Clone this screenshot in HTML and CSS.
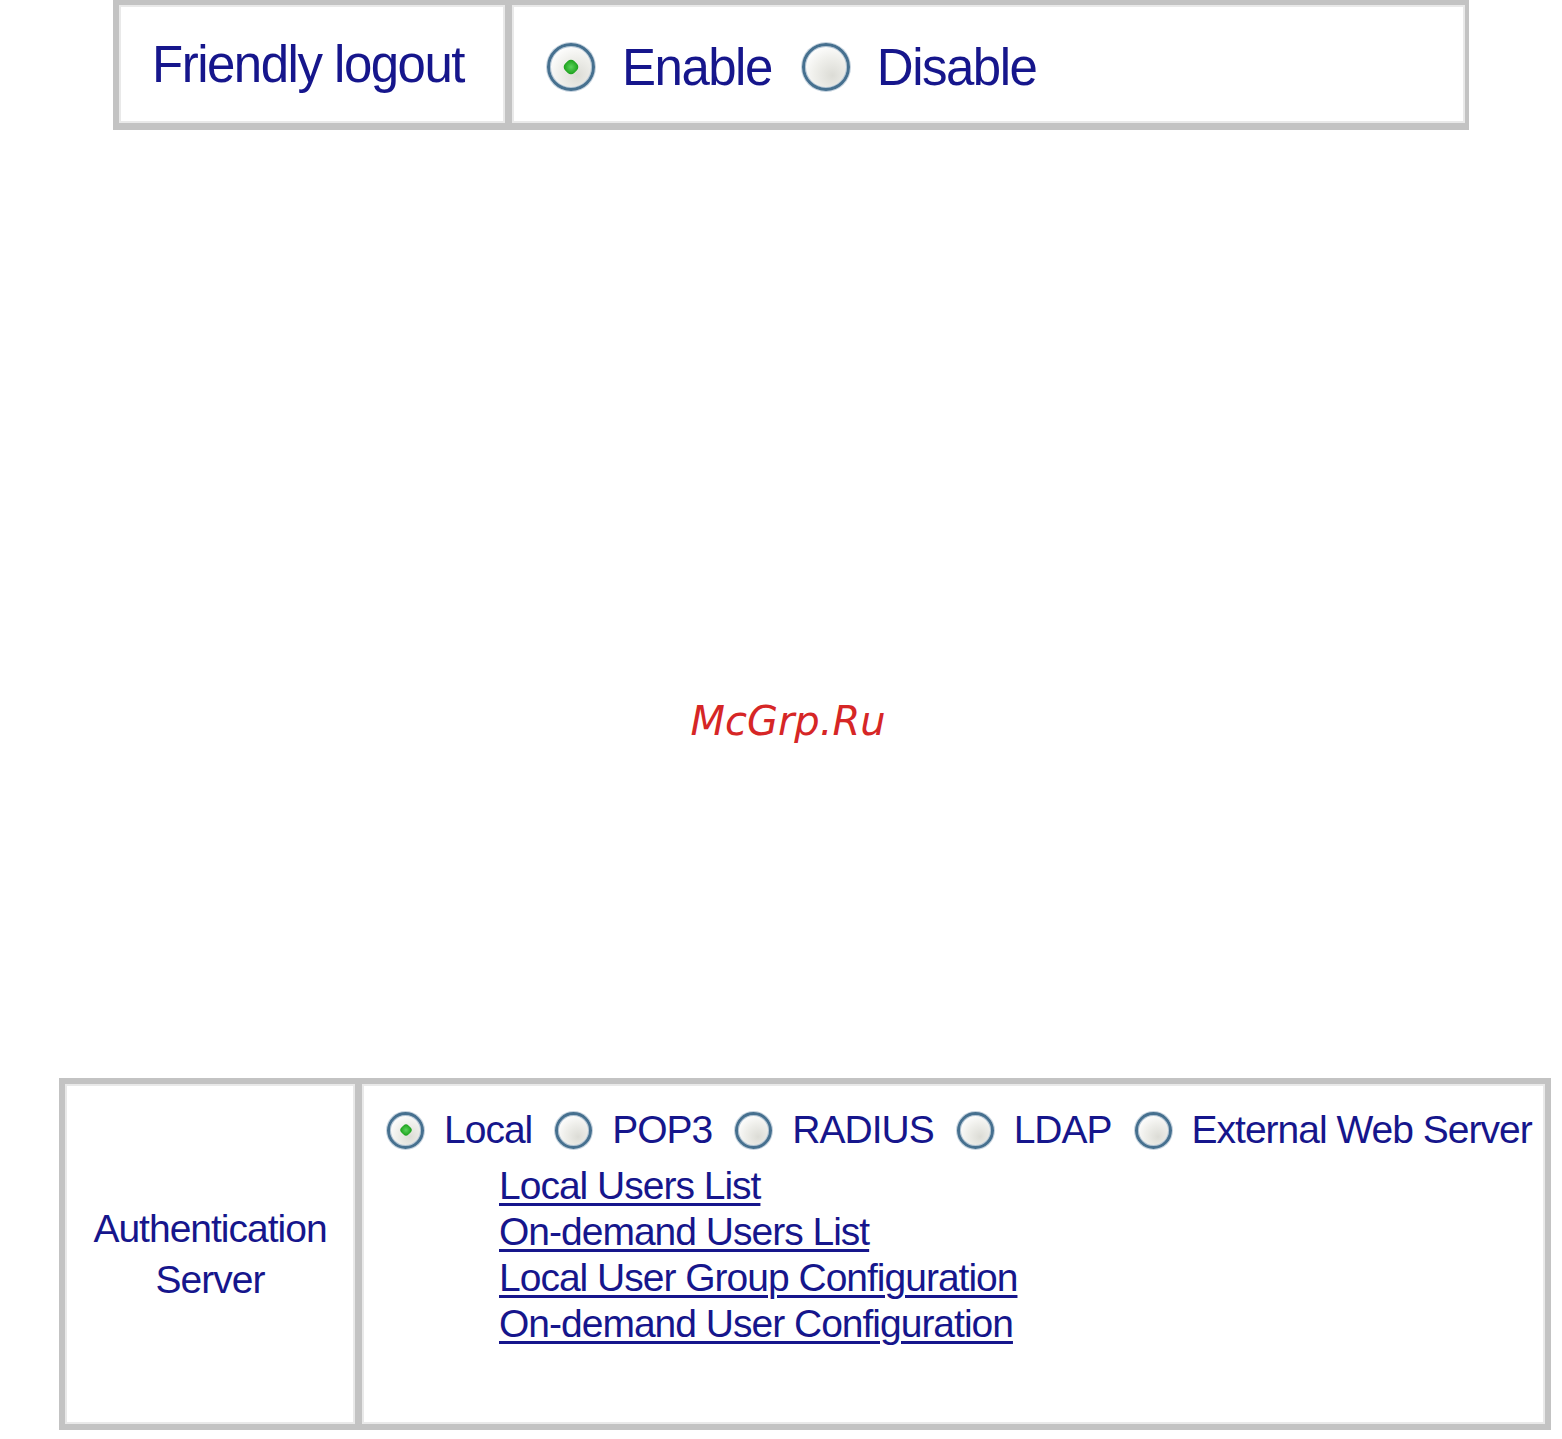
FILE: index.html
```html
<!DOCTYPE html>
<html lang="en">
<head>
<meta charset="utf-8">
<title>Login settings</title>
<link rel="stylesheet" href="styles.css">
</head>
<body>
<div class="page">
  <table class="opt opt-logout">
    <tr>
      <td class="label">Friendly logout</td>
      <td class="value">
        <div class="choices">
          <span class="radio on"></span><span class="choice-text">Enable</span>
          <span class="radio"></span><span class="choice-text">Disable</span>
        </div>
      </td>
    </tr>
  </table>

  <div class="mark">McGrp.Ru</div>

  <table class="opt opt-auth">
    <colgroup>
      <col class="col-label">
      <col>
    </colgroup>
    <tr>
      <td class="label">Authentication<br>Server</td>
      <td class="value">
        <div class="choices">
          <span class="radio on"></span><span class="choice-text">Local</span>
          <span class="radio"></span><span class="choice-text">POP3</span>
          <span class="radio"></span><span class="choice-text">RADIUS</span>
          <span class="radio"></span><span class="choice-text">LDAP</span>
          <span class="radio"></span><span class="choice-text">External Web Server</span>
        </div>
        <ul class="links">
          <li><a href="#">Local Users List</a></li>
          <li><a href="#">On-demand Users List</a></li>
          <li><a href="#">Local User Group Configuration</a></li>
          <li><a href="#">On-demand User Configuration</a></li>
        </ul>
      </td>
    </tr>
  </table>
</div>
</body>
</html>
```

FILE: styles.css
```css
html, body {
  margin: 0;
  padding: 0;
  background: #ffffff;
}

body {
  font-family: "Liberation Sans", Arial, sans-serif;
  color: #16168c;
}

.page {
  width: 1562px;
}

/* settings tables */
.opt {
  border-collapse: separate;
  border-spacing: 0;
  border: 6px solid #c3c3c3;
  background: #ffffff;
}

.opt td {
  padding: 0;
  box-shadow: inset 0 0 0 2px #e9e9e9;
}

.opt .label {
  border-right: 7px solid #c3c3c3;
}

/* friendly logout row */
.opt-logout {
  margin-left: 113px;
  width: 1356px;
  height: 130px;
  border-top-width: 5px;
  border-bottom-width: 7px;
  border-right-width: 4px;
  font-size: 51px;
  letter-spacing: -1.5px;
}

.opt-logout .label {
  width: 353px;
  padding-left: 33px;
  vertical-align: middle;
  white-space: nowrap;
}

.opt-logout .value {
  padding-left: 35px;
  vertical-align: middle;
}

.opt-logout .choices {
  display: flex;
  align-items: center;
  padding-top: 6px;
}

.opt-logout .radio {
  width: 48px;
  height: 48px;
  margin-right: 27px;
}

.opt-logout .radio.on::after {
  width: 13px;
  height: 13px;
}

.opt-logout .choice-text {
  margin-right: 30px;
}

/* radio buttons */
.radio {
  position: relative;
  flex: none;
  box-sizing: border-box;
  border-radius: 50%;
  border: 3px solid #46708f;
  background: radial-gradient(circle at 65% 70%, #dcdcd6 0%, #efefeb 45%, #ffffff 80%);
  box-shadow: 0 0 0 1px rgba(90, 125, 160, 0.35), inset 0 0 0 1px #b4c6d6;
}

.radio.on::after {
  content: "";
  position: absolute;
  left: 50%;
  top: 50%;
  transform: translate(-50%, -50%) rotate(45deg);
  border-radius: 35%;
  background: radial-gradient(circle, #5bd35b 0%, #22a622 70%);
}

/* watermark */
.mark {
  margin: 567px 0 333px;
  height: 48px;
  line-height: 48px;
  text-align: center;
  padding-left: 14px;
  font-family: "DejaVu Sans", sans-serif;
  font-style: oblique;
  font-size: 40px;
  color: #d62626;
}

/* authentication server row */
.opt-auth {
  margin-left: 59px;
  width: 1492px;
  height: 352px;
  table-layout: fixed;
  font-size: 39px;
  letter-spacing: -1px;
}

.opt-auth .col-label {
  width: 297px;
}

.opt-auth .label {
  text-align: center;
  vertical-align: middle;
  line-height: 51px;
}

.opt-auth .value {
  vertical-align: top;
  padding: 23px 0 0 25px;
}

.opt-auth .choices {
  display: flex;
  align-items: center;
  height: 46px;
  white-space: nowrap;
}

.opt-auth .radio {
  width: 37px;
  height: 37px;
  margin-right: 20px;
}

.opt-auth .radio.on::after {
  width: 10px;
  height: 10px;
}

.opt-auth .choice-text {
  margin-right: 23px;
}

.links {
  list-style: none;
  margin: 10px 0 0;
  padding: 0 0 0 112px;
  line-height: 46px;
}

.links a {
  color: #16168c;
  text-decoration: underline;
  text-decoration-thickness: 3px;
  text-underline-offset: 4px;
}
```
